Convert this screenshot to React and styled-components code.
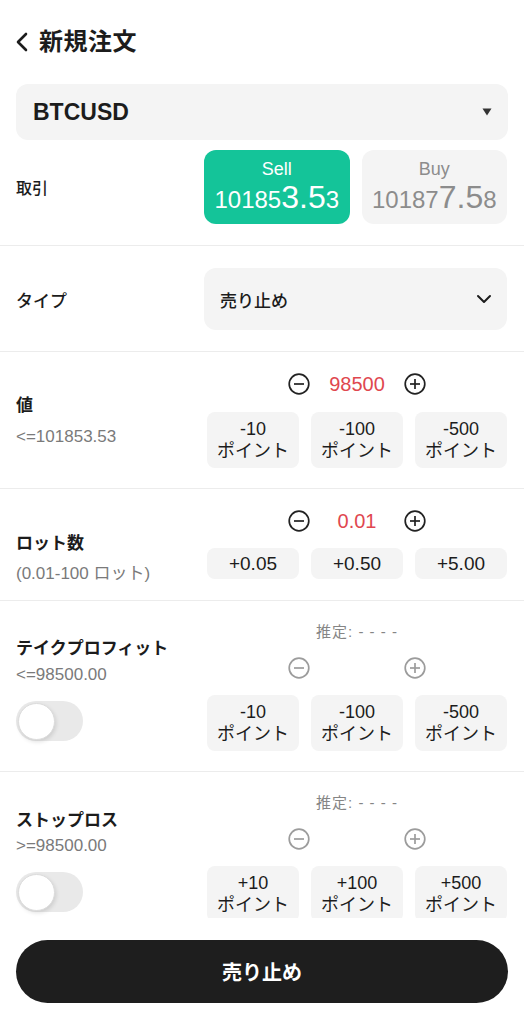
import * as React from "react";
import styled, { createGlobalStyle } from "styled-components";

const GlobalStyle = createGlobalStyle`
  html, body {
    margin: 0;
    padding: 0;
    background: #fff;
  }
  body {
    font-family: "Liberation Sans", "Noto Sans CJK JP", sans-serif;
    color: #1c1c1c;
  }
  * {
    box-sizing: border-box;
  }
`;

const Page = styled.div`
  width: 524px;
  height: 1024px;
  display: flex;
  flex-direction: column;
  overflow: hidden;
  background: #fff;
`;

const Scroll = styled.div`
  flex: 1;
  min-height: 0;
  overflow: hidden;
`;

const Header = styled.header`
  height: 84px;
  display: flex;
  align-items: center;
  gap: 11px;
  padding: 0 16px;
`;

const Title = styled.h1`
  margin: 0;
  font-size: 24px;
  line-height: 28px;
  font-weight: 700;
  letter-spacing: 0.5px;
`;

const SymbolWrap = styled.div`
  padding: 0 16px;
`;

const SymbolSelect = styled.div`
  height: 56px;
  border-radius: 12px;
  background: #f4f4f4;
  display: flex;
  align-items: center;
  justify-content: space-between;
  padding: 0 16px 0 17px;
  font-size: 23px;
  font-weight: 700;
`;

const Section = styled.section`
  display: grid;
  grid-template-columns: 188px 303px;
  align-items: ${({ $align }) => $align || "start"};
  padding: ${({ $pad }) => $pad};
  border-bottom: 1px solid #ececec;
`;

const RowLabel = styled.div`
  font-size: ${({ $size }) => $size || 16}px;
  font-weight: 500;
`;

const PriceButtons = styled.div`
  display: grid;
  grid-template-columns: 1fr 1fr;
  gap: 12px;
`;

const PriceButton = styled.button`
  height: 74px;
  border: 0;
  border-radius: 12px;
  background: ${({ $active }) => ($active ? "#14c499" : "#f4f4f4")};
  color: ${({ $active }) => ($active ? "#fff" : "#8c8c8c")};
  display: flex;
  flex-direction: column;
  align-items: center;
  justify-content: center;
  padding: 0;
  font-family: inherit;
`;

const Side = styled.span`
  font-size: 18px;
  line-height: 22px;
`;

const Price = styled.span`
  font-size: 24px;
  line-height: 34px;
  b {
    font-size: 32px;
    font-weight: 400;
  }
`;

const TypeSelect = styled.div`
  height: 62px;
  border-radius: 12px;
  background: #f4f4f4;
  display: flex;
  align-items: center;
  justify-content: space-between;
  padding: 0 15px 0 16px;
  font-size: 17px;
  font-weight: 500;
`;

const LabelBlock = styled.div`
  padding-top: ${({ $top }) => $top}px;
  margin-bottom: -12px;
  display: flex;
  flex-direction: column;
  align-items: flex-start;
`;

const FieldLabel = styled.div`
  font-size: 17px;
  line-height: 22px;
  font-weight: 700;
`;

const SubLabel = styled.div`
  margin-top: ${({ $gap }) => $gap}px;
  font-size: 17px;
  line-height: 20px;
  color: #7a7a7a;
`;

const Toggle = styled.div`
  margin-top: 16px;
  width: 67px;
  height: 40px;
  border-radius: 20px;
  background: #e9e9e9;
  padding: 2px;
  display: flex;
  align-items: center;
`;

const Knob = styled.div`
  width: 37px;
  height: 37px;
  border-radius: 50%;
  background: #fff;
  border: 1px solid #dcdcdc;
  box-shadow: 1px 2px 4px rgba(0, 0, 0, 0.12);
`;

const Controls = styled.div`
  display: flex;
  flex-direction: column;
  gap: ${({ $gap }) => $gap}px;
  padding-left: 3px;
`;

const Estimate = styled.div`
  text-align: center;
  font-size: 15px;
  line-height: 18px;
  letter-spacing: 1px;
  color: #858585;
`;

const Stepper = styled.div`
  height: 24px;
  display: flex;
  align-items: center;
  justify-content: center;
`;

const StepValue = styled.span`
  width: 94px;
  text-align: center;
  font-size: 20px;
  color: #e0474f;
`;

const StepGrid = styled.div`
  display: grid;
  grid-template-columns: repeat(3, 1fr);
  gap: 12px;
`;

const StepButton = styled.button`
  height: ${({ $h }) => $h}px;
  border: 0;
  border-radius: 8px;
  background: #f4f4f4;
  color: #1c1c1c;
  font-family: inherit;
  font-size: ${({ $size }) => $size || 18}px;
  line-height: 22px;
  padding: 0;
  display: flex;
  flex-direction: column;
  align-items: center;
  justify-content: center;
`;

const Footer = styled.footer`
  padding: 22px 16px 21px;
`;

const SubmitButton = styled.button`
  width: 100%;
  height: 63px;
  border: 0;
  border-radius: 32px;
  background: #1e1e1e;
  color: #fff;
  font-family: inherit;
  font-size: 20px;
  font-weight: 700;
`;

const RoundIcon = ({ plus, muted }) => {
  const c = muted ? "#9c9c9c" : "#222";
  return (
    <svg width="22" height="22" viewBox="0 0 22 22">
      <circle cx="11" cy="11" r="9.8" fill="none" stroke={c} strokeWidth="1.7" />
      <line x1="6" y1="11" x2="16" y2="11" stroke={c} strokeWidth="1.7" />
      {plus && <line x1="11" y1="6" x2="11" y2="16" stroke={c} strokeWidth="1.7" />}
    </svg>
  );
};

const StepRow = ({ value, muted }) => (
  <Stepper>
    <RoundIcon muted={muted} />
    <StepValue>{value}</StepValue>
    <RoundIcon plus muted={muted} />
  </Stepper>
);

const PointButtons = ({ items }) => (
  <StepGrid>
    {items.map((v) => (
      <StepButton key={v} $h={56}>
        <span>{v}</span>
        <span>ポイント</span>
      </StepButton>
    ))}
  </StepGrid>
);

export default function App() {
  return (
    <Page>
      <GlobalStyle />
      <Scroll>
        <Header>
          <svg width="12" height="20" viewBox="0 0 12 20">
            <path d="M10 2 L2 10 L10 18" fill="none" stroke="#1c1c1c" strokeWidth="2.6" strokeLinecap="round" strokeLinejoin="round" />
          </svg>
          <Title>新規注文</Title>
        </Header>
        <SymbolWrap>
          <SymbolSelect>
            BTCUSD
            <svg width="10" height="8" viewBox="0 0 10 8">
              <path d="M0.5 0.5 H9.5 L5 7.5 Z" fill="#333" />
            </svg>
          </SymbolSelect>
        </SymbolWrap>

        <Section $pad="10px 16px 21px" $align="center">
          <RowLabel>取引</RowLabel>
          <PriceButtons>
            <PriceButton $active>
              <Side>Sell</Side>
              <Price>
                10185<b>3.5</b>3
              </Price>
            </PriceButton>
            <PriceButton>
              <Side>Buy</Side>
              <Price>
                10187<b>7.5</b>8
              </Price>
            </PriceButton>
          </PriceButtons>
        </Section>

        <Section $pad="22px 16px 21px" $align="center">
          <RowLabel $size={17}>タイプ</RowLabel>
          <TypeSelect>
            売り止め
            <svg width="16" height="10" viewBox="0 0 16 10">
              <path d="M2 2 L8 8 L14 2" fill="none" stroke="#1c1c1c" strokeWidth="2" strokeLinecap="round" strokeLinejoin="round" />
            </svg>
          </TypeSelect>
        </Section>

        <Section $pad="20px 16px 20px">
          <LabelBlock $top={23}>
            <FieldLabel>値</FieldLabel>
            <SubLabel $gap={10}>&lt;=101853.53</SubLabel>
          </LabelBlock>
          <Controls $gap={16}>
            <StepRow value="98500" />
            <PointButtons items={["-10", "-100", "-500"]} />
          </Controls>
        </Section>

        <Section $pad="20px 16px 21px">
          <LabelBlock $top={24}>
            <FieldLabel>ロット数</FieldLabel>
            <SubLabel $gap={9}>(0.01-100 ロット)</SubLabel>
          </LabelBlock>
          <Controls $gap={15}>
            <StepRow value="0.01" />
            <StepGrid>
              {["+0.05", "+0.50", "+5.00"].map((v) => (
                <StepButton key={v} $h={31} $size={19}>
                  {v}
                </StepButton>
              ))}
            </StepGrid>
          </Controls>
        </Section>

        <Section $pad="22px 16px 20px">
          <LabelBlock $top={15}>
            <FieldLabel>テイクプロフィット</FieldLabel>
            <SubLabel $gap={5}>&lt;=98500.00</SubLabel>
            <Toggle>
              <Knob />
            </Toggle>
          </LabelBlock>
          <Controls $gap={15}>
            <Estimate>推定: - - - -</Estimate>
            <StepRow value="" muted />
            <PointButtons items={["-10", "-100", "-500"]} />
          </Controls>
        </Section>

        <Section $pad="22px 16px 20px">
          <LabelBlock $top={16}>
            <FieldLabel>ストップロス</FieldLabel>
            <SubLabel $gap={4}>&gt;=98500.00</SubLabel>
            <Toggle>
              <Knob />
            </Toggle>
          </LabelBlock>
          <Controls $gap={15}>
            <Estimate>推定: - - - -</Estimate>
            <StepRow value="" muted />
            <PointButtons items={["+10", "+100", "+500"]} />
          </Controls>
        </Section>
      </Scroll>
      <Footer>
        <SubmitButton>売り止め</SubmitButton>
      </Footer>
    </Page>
  );
}
